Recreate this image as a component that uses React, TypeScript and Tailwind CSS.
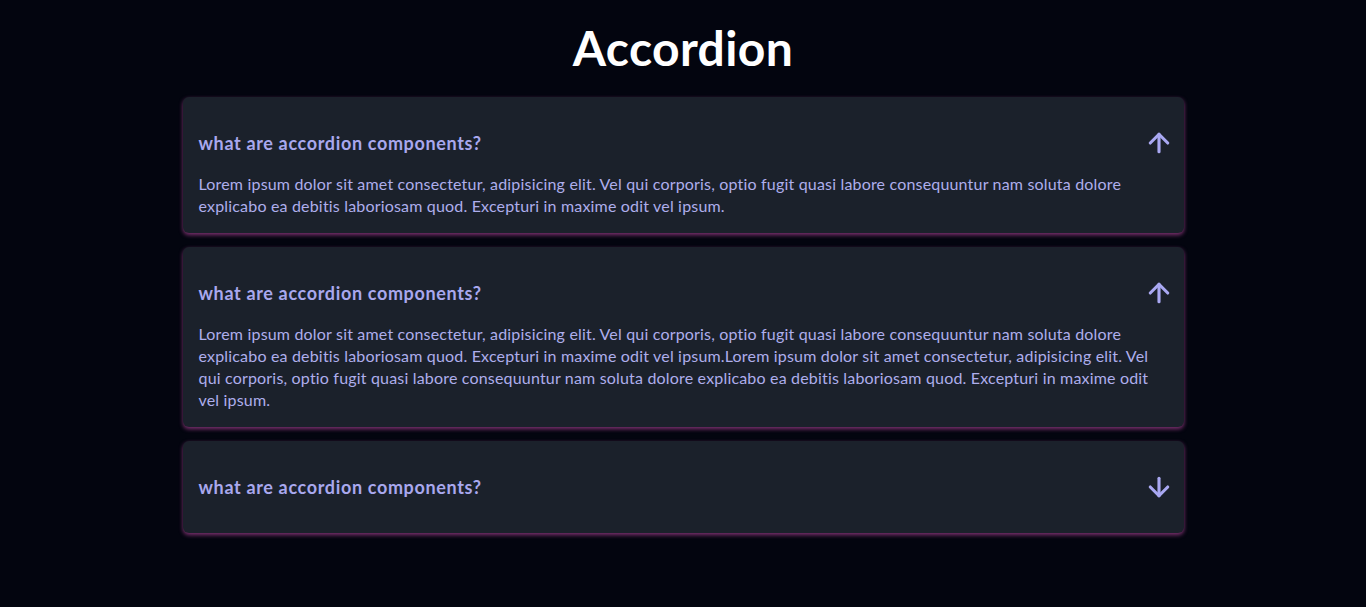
import React, { useState } from "react";
import { ArrowUp, ArrowDown } from "lucide-react";

const short =
  "Lorem ipsum dolor sit amet consectetur, adipisicing elit. Vel qui corporis, optio fugit quasi labore consequuntur nam soluta dolore explicabo ea debitis laboriosam quod. Excepturi in maxime odit vel ipsum.";

const items = [
  { q: "what are accordion components?", a: short },
  { q: "what are accordion components?", a: short + short },
  { q: "what are accordion components?", a: short },
];

function Item({ q, a, initOpen }: { q: string; a: string; initOpen: boolean }) {
  const [open, setOpen] = useState(initOpen);
  return (
    <div className="bg-[#1b212b] rounded-md px-4 pt-4 pb-4 shadow-[0_2px_4px_rgba(210,80,180,0.6)]">
      <button
        className="w-full h-[60px] flex items-center justify-between text-left cursor-pointer"
        onClick={() => setOpen(!open)}
      >
        <span className="text-[18px] leading-6 font-bold tracking-[0.65px] text-[#a9a8ee]">{q}</span>
        {open ? (
          <ArrowUp size={30} strokeWidth={2.5} className="text-[#a9a8f2] -mr-[6px]" />
        ) : (
          <ArrowDown size={30} strokeWidth={2.5} className="text-[#a9a8f2] -mr-[6px]" />
        )}
      </button>
      {open && <p className="text-base leading-[22px] tracking-[0.18px] text-[#aeaeec]">{a}</p>}
    </div>
  );
}

export default function App() {
  return (
    <div
      className="min-h-screen bg-[#03050f] pt-6 pb-10"
      style={{ fontFamily: "Lato, 'Noto Sans', sans-serif" }}
    >
      <h1 className="text-center text-5xl leading-[48px] font-bold tracking-[0.4px] text-white mb-[25px]">
        Accordion
      </h1>
      <div className="max-w-[1001px] mx-auto flex flex-col gap-[14px]">
        {items.map((it, i) => (
          <Item key={i} q={it.q} a={it.a} initOpen={i < 2} />
        ))}
      </div>
    </div>
  );
}
